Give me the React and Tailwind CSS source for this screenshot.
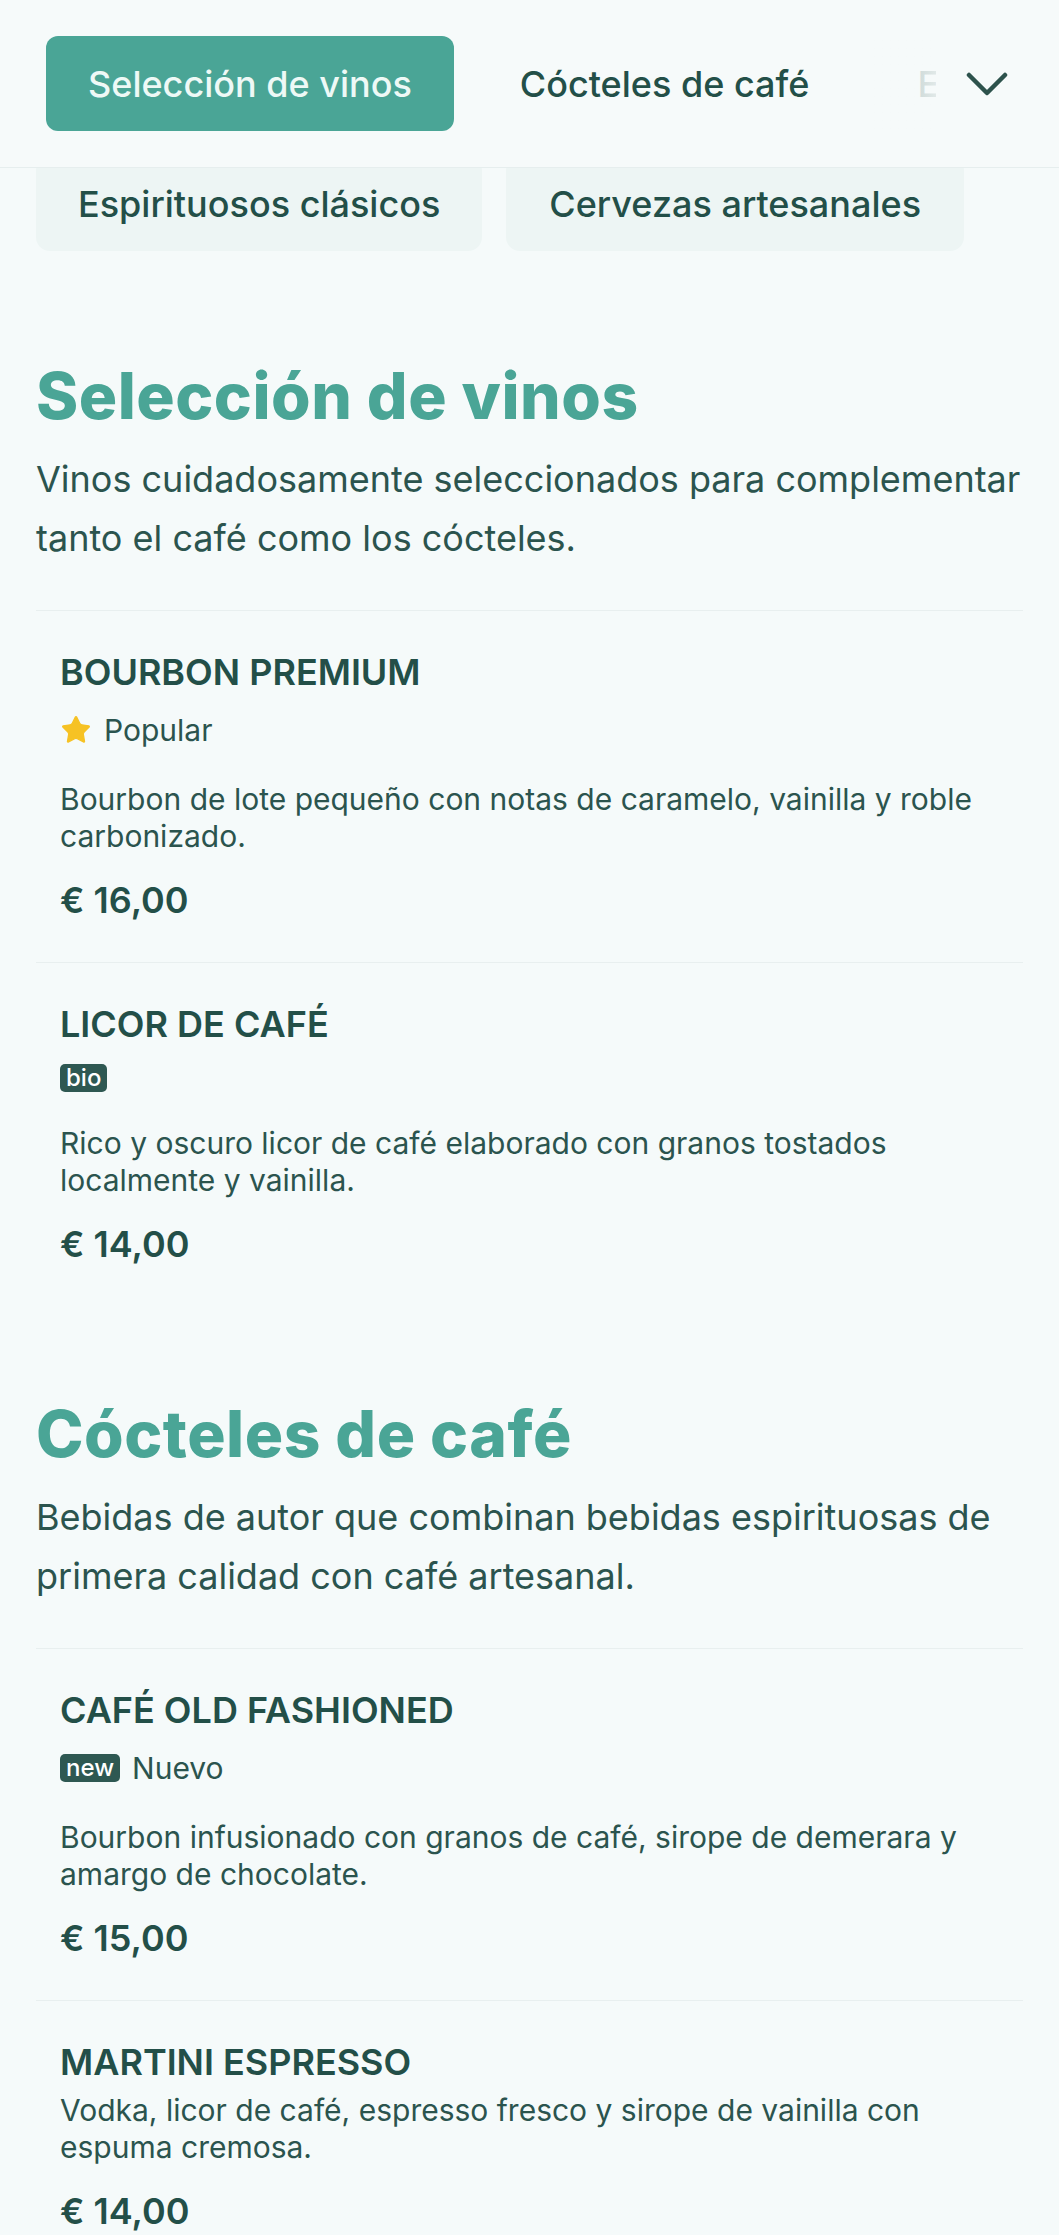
import { Star } from 'lucide-react';

const sections = [
  {
    title: 'Selección de vinos',
    description: 'Vinos cuidadosamente seleccionados para complementar tanto el café como los cócteles.',
    items: [
      {
        name: 'BOURBON PREMIUM',
        popular: true,
        description: 'Bourbon de lote pequeño con notas de caramelo, vainilla y roble carbonizado.',
        price: '€ 16,00',
      },
      {
        name: 'LICOR DE CAFÉ',
        badge: 'bio',
        description: 'Rico y oscuro licor de café elaborado con granos tostados localmente y vainilla.',
        price: '€ 14,00',
      },
    ],
  },
  {
    title: 'Cócteles de café',
    description: 'Bebidas de autor que combinan bebidas espirituosas de primera calidad con café artesanal.',
    items: [
      {
        name: 'CAFÉ OLD FASHIONED',
        badge: 'new',
        label: 'Nuevo',
        description: 'Bourbon infusionado con granos de café, sirope de demerara y amargo de chocolate.',
        price: '€ 15,00',
      },
      {
        name: 'MARTINI ESPRESSO',
        description: 'Vodka, licor de café, espresso fresco y sirope de vainilla con espuma cremosa.',
        price: '€ 14,00',
      },
    ],
  },
];

function MenuItem({ item, last }) {
  const hasTags = item.popular || item.badge;
  return (
    <div className={`px-[24px] pt-[39px] pb-[40px] ${last ? '' : 'border-b border-[#e8efef]'}`}>
      <h3 className="text-[36px] leading-[44px] font-semibold text-[#234f48]">{item.name}</h3>
      {hasTags && (
        <div className="mt-[18px] flex items-center gap-[12px]">
          {item.popular && (
            <>
              <Star className="h-[32px] w-[32px] fill-[#f6c224] text-[#f6c224]" strokeWidth={1} />
              <span className="text-[30px] leading-[36px] text-[#2b544e]">Popular</span>
            </>
          )}
          {item.badge && (
            <span className="rounded-[5px] bg-[#2e5852] px-[6px] text-[24px] leading-[28px] font-medium text-white">
              {item.badge}
            </span>
          )}
          {item.label && <span className="text-[30px] leading-[36px] text-[#2b544e]">{item.label}</span>}
        </div>
      )}
      <p className={`${hasTags ? 'mt-[33px]' : 'mt-[8px]'} text-[30px] leading-[37px] text-[#2b544e]`}>
        {item.description}
      </p>
      <p className="mt-[23px] text-[36px] leading-[44px] font-semibold text-[#234f48]">{item.price}</p>
    </div>
  );
}

export default function App() {
  return (
    <div className="min-h-screen bg-[#f5fafa] text-[#234f48]" style={{ fontFamily: 'Inter, "Noto Sans", sans-serif' }}>
      <header className="relative z-10 flex h-[168px] items-center border-b border-[#e6eeee] bg-[#f6fafa] pl-[46px] pr-[51px]">
        <div className="relative flex-1 overflow-hidden">
          <div className="flex gap-[24px] whitespace-nowrap">
            <button className="h-[95px] shrink-0 rounded-[12px] bg-[#4aa596] px-[42px] text-[36px] font-medium text-[#eef9f6]">
              Selección de vinos
            </button>
            <button className="h-[95px] shrink-0 rounded-[12px] px-[42px] text-[36px] font-medium text-[#234f48]">
              Cócteles de café
            </button>
            <button className="h-[95px] shrink-0 rounded-[12px] px-[42px] text-[36px] font-medium text-[#234f48]">
              Espirituosos clásicos
            </button>
          </div>
          <div className="pointer-events-none absolute inset-y-0 right-0 w-[64px] bg-gradient-to-l from-[#f6fafa]/90 to-[#f6fafa]/60" />
        </div>
        <button className="ml-[30px] flex h-[42px] w-[42px] items-center justify-center">
          <svg width="42" height="26" viewBox="0 0 42 26" fill="none" stroke="#2d524c" strokeWidth="4.5" strokeLinecap="round" strokeLinejoin="round">
            <polyline points="3,4 21,22 39,4" />
          </svg>
        </button>
      </header>

      <div className="-mt-[12px] flex gap-[24px] px-[36px]">
        <div className="flex h-[95px] items-center rounded-[14px] bg-[#edf5f4] px-[42px] text-[36px] font-medium">
          Espirituosos clásicos
        </div>
        <div className="flex h-[95px] items-center rounded-[14px] bg-[#edf5f4] px-[43px] text-[36px] font-medium">
          Cervezas artesanales
        </div>
      </div>

      <main className="px-[36px] pb-[20px]">
        {sections.map((section, i) => (
          <section key={section.title} className={i === 0 ? 'pt-[107px]' : 'pt-[90px]'}>
            <h2 className="text-[64px] leading-[76px] font-extrabold tracking-[0.5px] text-[#4aa596]">{section.title}</h2>
            <p className="mt-[16px] text-[36px] leading-[58.5px] text-[#2b544e]">{section.description}</p>
            <div className="mt-[43px] border-t border-[#e8efef]">
              {section.items.map((item, j) => (
                <MenuItem key={item.name} item={item} last={j === section.items.length - 1 && i === 0} />
              ))}
            </div>
          </section>
        ))}
      </main>
    </div>
  );
}
